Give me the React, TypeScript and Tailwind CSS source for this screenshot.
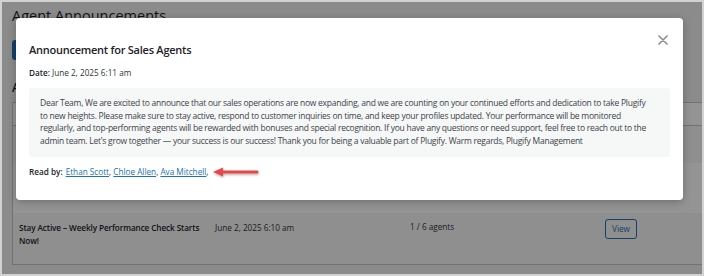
import React from 'react'

const font = { fontFamily: '"Open Sans", "Noto Sans", Arial, sans-serif' }

function CloseIcon() {
  return (
    <svg width="10" height="10" viewBox="0 0 10 10" fill="none" stroke="#8c8f94" strokeWidth="1.7" strokeLinecap="round">
      <path d="M1 1 L9 9 M9 1 L1 9" />
    </svg>
  )
}

function RedArrow() {
  return (
    <svg width="50" height="14" viewBox="0 0 50 14" className="ml-[4px] shrink-0 overflow-visible">
      <defs>
        <filter id="sh" x="-20%" y="-60%" width="140%" height="220%">
          <feDropShadow dx="0.5" dy="1.2" stdDeviation="0.8" floodColor="#000" floodOpacity="0.35" />
        </filter>
      </defs>
      <g filter="url(#sh)">
        <line x1="9" y1="7" x2="45" y2="7" stroke="#e8474a" strokeWidth="3" strokeLinecap="round" />
        <polygon points="1,7 11,2.5 11,11.5" fill="#e8474a" />
      </g>
    </svg>
  )
}

export default function App() {
  const body =
    "Dear Team, We are excited to announce that our sales operations are now expanding, and we are counting on your continued efforts and dedication to take Plugify to new heights. Please make sure to stay active, respond to customer inquiries on time, and keep your profiles updated. Your performance will be monitored regularly, and top-performing agents will be rewarded with bonuses and special recognition. If you have any questions or need support, feel free to reach out to the admin team. Let's grow together \u2014 your success is our success! Thank you for being a valuable part of Plugify. Warm regards, Plugify Management"

  return (
    <div className="relative w-[704px] h-[276px] overflow-hidden border-2 border-[#d2d2d2] bg-[#f0f0f1] text-[#1d2327]" style={font}>
      {/* page underneath */}
      <div className="pl-[10px] pt-[2px]">
        <h1 className="text-[14.5px] leading-[24px] font-normal">Agent Announcements</h1>
        <div className="mt-[12px] h-[20px] w-[120px] rounded-[3px] bg-[#2271b1]" />
        <h2 className="mt-[20px] text-[12px] leading-[16px] font-semibold">All Announcements</h2>
        <div className="mt-[6px] w-[720px] border border-[#c3c4c7] bg-white text-[8.2px]">
          <div className="h-[23px] border-b border-[#c3c4c7]" />
          <div className="h-[37px] bg-[#f6f7f7]" />
          <div className="h-[50px] bg-white" />
          <div className="flex h-[51px] bg-[#f6f7f7] pt-[8px] text-[#2c3338]">
            <div className="w-[195px] shrink-0 px-[6px] font-semibold leading-[13px] tracking-[-0.1px] text-[#1d2327]">
              Stay Active – Weekly Performance Check Starts Now!
            </div>
            <div className="w-[195px] shrink-0 px-[7px] leading-[13px]">June 2, 2025 6:10 am</div>
            <div className="w-[195px] shrink-0 px-[7px] leading-[11px]">1 / 6 agents</div>
            <div className="w-[195px] shrink-0 px-[7px] -mt-[2px]">
              <span className="inline-flex h-[20px] items-center rounded-[3px] border border-[#2271b1] px-[6px] text-[#2271b1]">
                View
              </span>
            </div>
          </div>
        </div>
      </div>

      {/* modal overlay */}
      <div className="absolute inset-0 bg-black/[0.42] pl-[14px] pt-[16px]">
        <div className="relative w-[667px] rounded-[4px] bg-white px-[13px] pb-[21px] pt-[24px] shadow-[0_2px_8px_rgba(0,0,0,0.25)]">
          <button className="absolute right-[15px] top-[17px] flex h-[10px] w-[10px] items-center justify-center">
            <CloseIcon />
          </button>
          <h3 className="text-[11px] font-semibold leading-[16px] tracking-[-0.25px] text-[#1d2327]">Announcement for Sales Agents</h3>
          <p className="mt-[8px] text-[8.2px] leading-[13px] text-[#2c3338]">
            <span className="font-semibold text-[#1d2327]">Date:</span> June 2, 2025 6:11 am
          </p>
          <div className="mt-[9px] rounded-[3px] bg-[#f6f7f7] py-[9px] pl-[11px] pr-[18px] text-[8.5px] leading-[12.7px] tracking-[-0.25px] text-[#3c434a]">
            {body}
          </div>
          <div className="mt-[8px] flex items-center text-[8.2px] leading-[13px] text-[#2c3338]">
            <span className="font-semibold text-[#1d2327]">Read by:</span>
            <span className="ml-[3px]">
              <a href="#" className="text-[#2271b1] underline">Ethan Scott</a>,{' '}
              <a href="#" className="text-[#2271b1] underline">Chloe Allen</a>,{' '}
              <a href="#" className="text-[#2271b1] underline">Ava Mitchell</a>,
            </span>
            <RedArrow />
          </div>
        </div>
      </div>
    </div>
  )
}
